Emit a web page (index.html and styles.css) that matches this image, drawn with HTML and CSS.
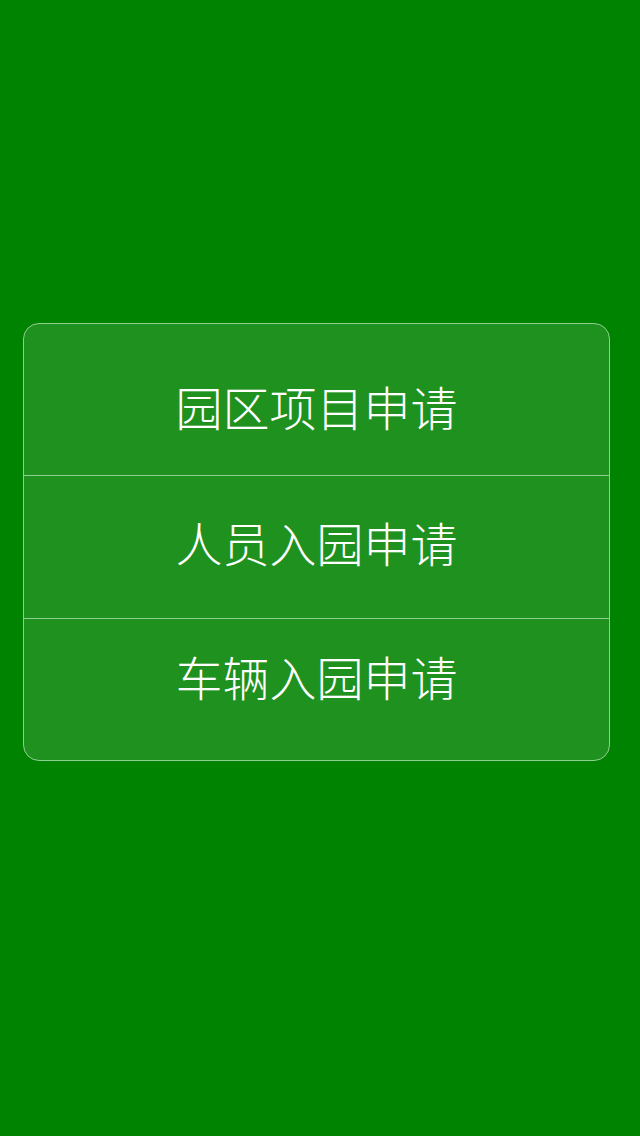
FILE: index.html
```html
<!DOCTYPE html>
<html lang="zh-CN">
<head>
<meta charset="utf-8">
<title>园区申请</title>
<link rel="stylesheet" href="styles.css">
</head>
<body>
<main class="screen">
  <section class="menu">
    <div class="item item-1"><span class="label">园区项目申请</span></div>
    <div class="item item-2"><span class="label">人员入园申请</span></div>
    <div class="item item-3"><span class="label">车辆入园申请</span></div>
  </section>
</main>
</body>
</html>
```
FILE: styles.css
```css
html, body {
  margin: 0;
  padding: 0;
}
body {
  background: #008300;
  width: 640px;
  height: 1136px;
  overflow: hidden;
}
.screen {
  padding: 323px 30px 0 23px;
}
.menu {
  width: 585px;
  border: 1px solid #8fcf8f;
  border-radius: 16px;
  background: #1f911f;
  overflow: hidden;
}
.item {
  display: flex;
  justify-content: center;
  align-items: flex-start;
  box-sizing: border-box;
}
.item + .item {
  border-top: 1px solid #8fcf8f;
}
.item-1 { height: 151px; padding-top: 58px; }
.item-2 { height: 143px; padding-top: 42px; }
.item-3 { height: 142px; padding-top: 33px; }
.label {
  font-family: "Noto Sans CJK SC", "Noto Sans", sans-serif;
  font-weight: 300;
  font-size: 47px;
  line-height: 47px;
  color: #ffffff;
  letter-spacing: 0;
}
```
